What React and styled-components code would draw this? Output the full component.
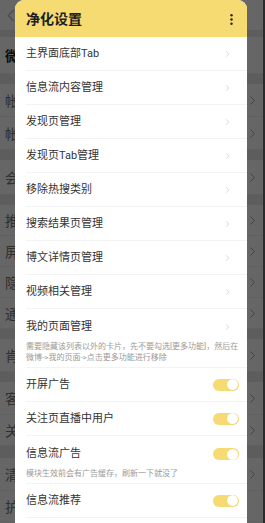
import React from 'react';
import styled, { createGlobalStyle } from 'styled-components';

const GlobalStyle = createGlobalStyle`
  html, body {
    margin: 0;
    padding: 0;
    background: #2b2b2b;
  }
  body {
    font-family: Roboto, "Noto Sans CJK SC", sans-serif;
    overflow: hidden;
  }
`;

const Screen = styled.div`
  position: relative;
  width: 265px;
  height: 523px;
  overflow: hidden;
  display: flex;
`;

/* page behind the dialog */
const Page = styled.div`
  flex: 1;
  display: flex;
  flex-direction: column;
  background: #e8e8e8;
`;

const ScrollEdge = styled.div`
  width: 2px;
  background: #6b6b6b;
`;

const NavBar = styled.div`
  height: 30px;
  flex-shrink: 0;
  display: flex;
  align-items: center;
  padding-left: 7px;
  background: #fff;
  border-bottom: 1px solid #e6e6e6;
`;

const Band = styled.div`
  height: ${props => props.h}px;
  flex-shrink: 0;
`;

const BgRow = styled.div`
  height: ${props => props.h}px;
  flex-shrink: 0;
  display: flex;
  align-items: center;
  justify-content: space-between;
  padding: 0 8px 0 5px;
  background: #fff;
  border-bottom: 1px solid #f1f1f1;
  font-size: 14px;
  color: ${props => (props.strong ? '#222' : '#777')};
  font-weight: ${props => (props.strong ? 700 : 400)};
`;

const Dim = styled.div`
  position: absolute;
  inset: 0;
  background: rgba(0, 0, 0, 0.6);
`;

const Dialog = styled.div`
  position: absolute;
  left: 15px;
  top: 0;
  width: 232px;
  height: 560px;
  background: #fff;
  border-radius: 9px;
  overflow: hidden;
`;

const Header = styled.div`
  height: 37px;
  display: flex;
  align-items: center;
  justify-content: space-between;
  padding: 1px 14px 0 11px;
  box-sizing: border-box;
  background: #f6da72;
`;

const Title = styled.h1`
  margin: 0;
  font-size: 14px;
  line-height: 18px;
  font-weight: 700;
  color: #1e1e1e;
`;

const Row = styled.div`
  display: flex;
  flex-direction: column;
  justify-content: center;
  min-height: 34px;
  padding: ${props => (props.tall ? '11px 8px 4px 0' : '0 8px 0 0')};
  margin-left: 11px;
  border-bottom: 1px solid #f3f3f3;
  box-sizing: border-box;
`;

const Line = styled.div`
  display: flex;
  align-items: center;
  justify-content: space-between;
`;

const RowTitle = styled.div`
  font-size: 11px;
  line-height: 14px;
  color: #333;
`;

const RowDesc = styled.div`
  margin-top: 7px;
  font-size: 8px;
  line-height: 11px;
  color: #9a9a9a;
  white-space: nowrap;
`;

const ChevronBox = styled.div`
  display: flex;
  align-items: center;
  height: 14px;
  margin-right: 10px;
`;

const Track = styled.div`
  width: 26px;
  height: 12px;
  border-radius: 6px;
  background: #f6da72;
  display: flex;
  align-items: center;
  justify-content: flex-end;
  padding: 0 1px;
  box-sizing: border-box;
`;

const Knob = styled.div`
  width: 11px;
  height: 11px;
  border-radius: 50%;
  background: #fff;
  box-shadow: 0 0 1px rgba(0, 0, 0, 0.15);
`;

const BgChevron = () => (
  <svg width="5" height="9" viewBox="0 0 5 9">
    <polyline points="0.5,0.5 4.5,4.5 0.5,8.5" fill="none" stroke="#a8a8a8" strokeWidth="1" />
  </svg>
);

const Chevron = () => (
  <ChevronBox>
    <svg width="3" height="6" viewBox="0 0 3 6">
      <polyline points="0.3,0.3 2.7,3 0.3,5.7" fill="none" stroke="#cfcfcf" strokeWidth="0.8" />
    </svg>
  </ChevronBox>
);

const MoreIcon = () => (
  <svg width="3" height="11" viewBox="0 0 3 11">
    <circle cx="1.5" cy="1.3" r="1.2" fill="#222" />
    <circle cx="1.5" cy="5.5" r="1.2" fill="#222" />
    <circle cx="1.5" cy="9.7" r="1.2" fill="#222" />
  </svg>
);

const Toggle = () => (
  <Track>
    <Knob />
  </Track>
);

const background = [
  { band: 6 },
  { label: '微', h: 36, strong: true },
  { band: 10 },
  { label: '帐', h: 32, arrow: true },
  { label: '帐', h: 32, arrow: true },
  { band: 10 },
  { label: '会', h: 34, arrow: true },
  { band: 10 },
  { label: '推', h: 30, arrow: true },
  { label: '屏', h: 30, arrow: true },
  { label: '隐', h: 30, arrow: true },
  { label: '通', h: 30, arrow: true },
  { band: 10 },
  { label: '肯', h: 32, arrow: true },
  { band: 10 },
  { label: '客', h: 32, arrow: true },
  { label: '关', h: 30, arrow: true },
  { band: 12 },
  { label: '清', h: 32, arrow: true },
  { label: '护', h: 30 },
  { label: '护', h: 30 },
];

const links = [
  '主界面底部Tab',
  '信息流内容管理',
  '发现页管理',
  '发现页Tab管理',
  '移除热搜类别',
  '搜索结果页管理',
  '博文详情页管理',
  '视频相关管理',
];

function SettingRow({ title, desc, toggle }) {
  return (
    <Row tall={!!desc}>
      <Line>
        <RowTitle>{title}</RowTitle>
        {toggle ? <Toggle /> : <Chevron />}
      </Line>
      {desc && <RowDesc>{desc}</RowDesc>}
    </Row>
  );
}

function App() {
  return (
    <Screen>
      <GlobalStyle />
      <Page>
        <NavBar>
          <svg width="8" height="13" viewBox="0 0 8 13">
            <polyline points="7,0.8 1.2,6.5 7,12.2" fill="none" stroke="#bdbdbd" strokeWidth="1.2" />
          </svg>
        </NavBar>
        {background.map((item, i) =>
          item.band ? (
            <Band key={i} h={item.band} />
          ) : (
            <BgRow key={i} h={item.h} strong={item.strong}>
              <span>{item.label}</span>
              {item.arrow && <BgChevron />}
            </BgRow>
          )
        )}
      </Page>
      <ScrollEdge />
      <Dim />

      <Dialog>
        <Header>
          <Title>净化设置</Title>
          <MoreIcon />
        </Header>

        {links.map(text => (
          <SettingRow key={text} title={text} />
        ))}

        <SettingRow
          title="我的页面管理"
          desc={
            <>
              需要隐藏该列表以外的卡片，先不要勾选[更多功能]，然后在
              <br />
              微博-&gt;我的页面-&gt;点击更多功能进行移除
            </>
          }
        />
        <SettingRow title="开屏广告" toggle />
        <SettingRow title="关注页直播中用户" toggle />
        <SettingRow title="信息流广告" desc="模块生效前会有广告缓存，刷新一下就没了" toggle />
        <SettingRow title="信息流推荐" toggle />
      </Dialog>
    </Screen>
  );
}

export default App;
